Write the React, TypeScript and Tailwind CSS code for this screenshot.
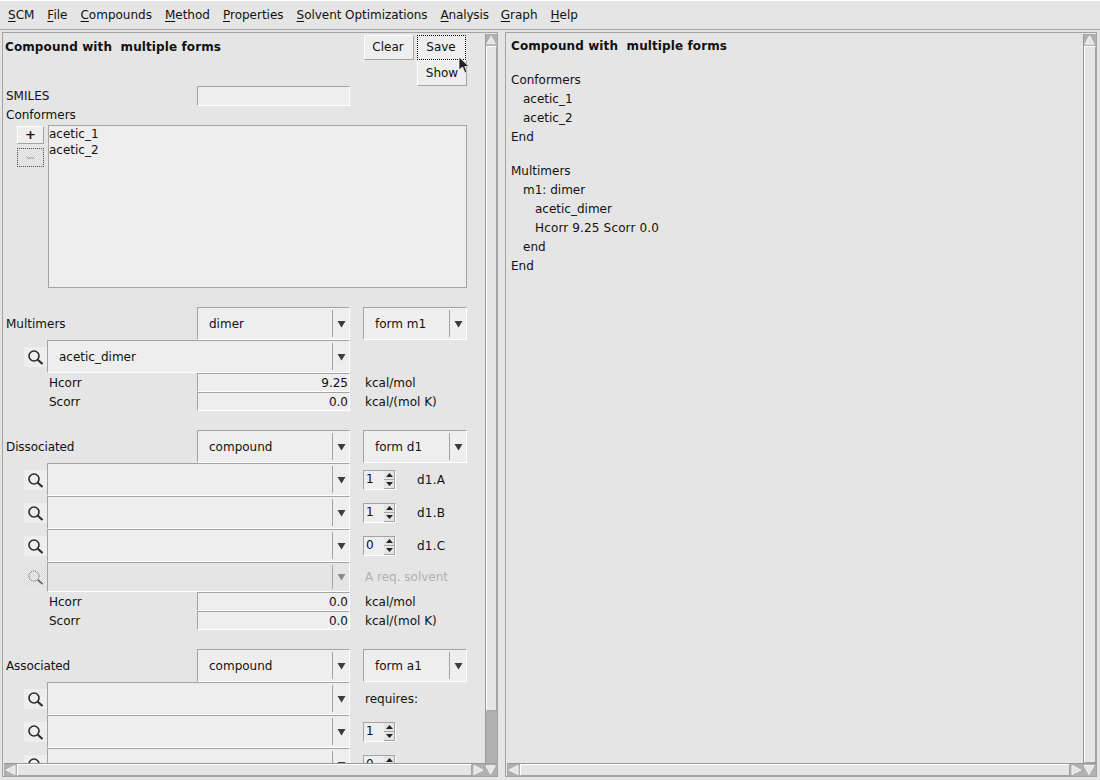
import React from "react";

const menus: [string, string][] = [
  ["SCM", ""],
  ["File", ""],
  ["Compounds", ""],
  ["Method", ""],
  ["Properties", ""],
  ["Solvent Optimizations", "tracking-[-0.05px]"],
  ["Analysis", "tracking-[-0.15px]"],
  ["Graph", "ml-[-1px]"],
  ["Help", ""],
];

function SearchIcon({ disabled }: { disabled?: boolean }) {
  return (
    <svg width="16" height="16" viewBox="0 0 16 16" fill="none" stroke={disabled ? "#555555" : "#2a2a2a"}>
      <circle cx="6" cy="7" r="5" strokeWidth={disabled ? 1 : 1.6} strokeDasharray={disabled ? "1 1" : undefined} />
      <path d="M9.8 10.8 L14.5 15" strokeWidth={disabled ? 1.6 : 2.2} />
    </svg>
  );
}

function Combo({ value, className, disabled }: { value?: string; className: string; disabled?: boolean }) {
  return (
    <div className={`flex border-t border-l border-t-[#a3a3a3] border-l-[#a3a3a3] border-r border-b border-r-white border-b-white ${disabled ? "bg-[#e5e5e5]" : "bg-[#eeeeee]"} ${className}`}>
      <div className="flex-1 min-w-0 pl-[11px] flex items-center">{value}</div>
      <div className="w-[17px] flex items-center justify-center my-[2px] border-l border-l-[#a3a3a3]">
        <svg width="9" height="8" viewBox="0 0 9 8">
          <polygon points="0.5,1 8.5,1 4.5,7.5" fill={disabled ? "#8a8a8a" : "#3c3c3c"} />
        </svg>
      </div>
    </div>
  );
}

function Field({ value, className }: { value?: string; className: string }) {
  return (
    <div className={`flex items-center justify-end pr-[1px] border-t border-l border-t-[#a3a3a3] border-l-[#a3a3a3] border-r border-b border-r-white border-b-white bg-[#eeeeee] ${className}`}>
      {value}
    </div>
  );
}

function FormRow({ label, first, second, labelClass = "" }: { label: string; first: string; second: string; labelClass?: string }) {
  return (
    <div className="flex h-[33px] shrink-0">
      <div className={`w-[194px] pl-[3px] flex items-center ${labelClass}`}>{label}</div>
      <Combo value={first} className="w-[153px]" />
      <Combo value={second} className="w-[104px] ml-[13px]" />
    </div>
  );
}

function SubRow({ value, disabled, children, h = "h-[33px]" }: { value?: string; disabled?: boolean; children?: React.ReactNode; h?: string }) {
  return (
    <div className={`flex shrink-0 ${h}`}>
      <div className="ml-[21px] w-[23px] h-full flex items-center">
        <div className={`w-[23px] h-[20px] flex items-center justify-center ${disabled ? "bg-[repeating-conic-gradient(#d8d8d8_0_25%,#eeeeee_0_50%)] bg-[length:2px_2px]" : "bg-[#eeeeee]"}`}>
          <SearchIcon disabled={disabled} />
        </div>
      </div>
      <Combo value={value} disabled={disabled} className="w-[303px]" />
      {children}
    </div>
  );
}

function ValueRow({ label, value, unit }: { label: string; value: string; unit: string }) {
  return (
    <div className="flex h-[19px] shrink-0">
      <div className="w-[194px] pl-[46px] flex items-center">{label}</div>
      <Field value={value} className="w-[153px]" />
      <div className="ml-[15px] flex items-center">{unit}</div>
    </div>
  );
}

function Spin({ value, tag }: { value: string; tag?: string }) {
  return (
    <div className="flex items-center ml-[13px]">
      <div className="w-[33px] h-[20px] flex border-t border-l border-t-[#a3a3a3] border-l-[#a3a3a3] border-r border-b border-r-white border-b-white bg-[#eeeeee]">
        <div className="flex-1 pl-[2px] flex items-center h-[17px]">{value}</div>
        <div className="w-[11px] flex flex-col">
          <div className="h-[9px] flex items-center justify-center bg-[#e5e5e5] border-r border-b border-r-[#a3a3a3] border-b-[#a3a3a3]">
            <svg width="7" height="4" viewBox="0 0 7 4"><polygon points="3.5,0 7,4 0,4" fill="#222222" /></svg>
          </div>
          <div className="h-[9px] flex items-center justify-center bg-[#e5e5e5] border-r border-b border-r-[#a3a3a3] border-b-[#a3a3a3]">
            <svg width="7" height="4" viewBox="0 0 7 4"><polygon points="0,0 7,0 3.5,4" fill="#222222" /></svg>
          </div>
        </div>
      </div>
      {tag && <div className="ml-[21px] tracking-[0.2px]">{tag}</div>}
    </div>
  );
}

function Arrow({ dir, className }: { dir: "up" | "down" | "left" | "right"; className: string }) {
  const pts = {
    up: "6,1.5 11,10.5 1,10.5",
    down: "1,1.5 11,1.5 6,10.5",
    left: "2,6 11,1.5 11,10.5",
    right: "2,1.5 11,6 2,10.5",
  }[dir];
  return (
    <div className={`shrink-0 bg-[#b0b0b0] flex items-center justify-center ${className}`}>
      <svg width="13" height="12" viewBox="0 0 13 12">
        <polygon points={pts} fill="#e5e5e5" stroke="#f4f4f4" strokeWidth="1" />
      </svg>
    </div>
  );
}

function VScroll({ thumbClass, trough, w }: { thumbClass: string; trough?: string; w: string }) {
  return (
    <div className={`shrink-0 flex flex-col ${w}`}>
      <div className="flex-1 mt-[1px] flex flex-col bg-[#b0b0b0] border-l border-l-[#999999]">
        <Arrow dir="up" className="h-[12px]" />
        <div className={`border border-[#a3a3a3] border-t-white border-l-white bg-[#e5e5e5] ${thumbClass}`} />
        {trough && <div className={`flex-1 ${trough}`} />}
      </div>
    </div>
  );
}

function HScroll({ corner }: { corner: string }) {
  return (
    <div className="h-[13px] shrink-0 pl-[1px] flex">
      <div className="flex-1 flex bg-[#b0b0b0] border-t border-t-[#999999]">
        <Arrow dir="left" className="w-[13px]" />
        <div className="flex-1 border border-[#a3a3a3] border-t-white border-l-white bg-[#e5e5e5]" />
        <Arrow dir="right" className="w-[13px]" />
        <Arrow dir="down" className={corner} />
      </div>
    </div>
  );
}

const outLines: [string, string][] = [
  ["Conformers", "pl-0"],
  ["acetic_1", "pl-[12px]"],
  ["acetic_2", "pl-[12px]"],
  ["End", "pl-0"],
];
const outLines2: [string, string][] = [
  ["Multimers", "pl-0"],
  ["m1: dimer", "pl-[12px]"],
  ["acetic_dimer", "pl-[24px]"],
  ["Hcorr 9.25 Scorr 0.0", "pl-[24px] tracking-[0.15px]"],
  ["end", "pl-[12px]"],
  ["End", "pl-0"],
];

export default function App() {
  return (
    <div className="relative w-[1100px] h-[780px] overflow-hidden flex flex-col bg-[#e5e5e5] text-[12px] text-[#111111] font-['DejaVu_Sans',sans-serif]">
      <div className="h-[30px] shrink-0 flex items-center gap-[13px] pl-[8px] border-b border-b-[#a3a3a3] border-t border-t-white">
        {menus.map(([m, c]) => (
          <span key={m} className={c}>
            <u className="underline-offset-2">{m[0]}</u>
            {m.slice(1)}
          </span>
        ))}
      </div>
      <div className="h-[745px] mt-[2px] flex pl-[2px] gap-[7px]">
        <div className="w-[496px] flex flex-col border border-[#a3a3a3]">
          <div className="flex-1 flex min-h-0">
            <div className="flex-1 overflow-hidden flex flex-col">
              <div className="flex justify-between shrink-0 h-[53px]">
                <div className="pl-[2px] pt-[5px] font-bold tracking-[0.1px]">Compound with&nbsp; multiple forms</div>
                <div className="flex mr-[18px] pt-[2px]">
                  <div className="w-[50px] h-[25px] pb-[1px] pr-[2px] flex items-center justify-center bg-[#eeeeee] border border-white border-r-[#a3a3a3] border-b-[#a3a3a3]">Clear</div>
                  <div className="ml-[3px] w-[50px] flex flex-col">
                    <div className="h-[25px] w-[49px] pb-[1px] pr-[1px] flex items-center justify-center bg-[#eeeeee] border border-dotted border-black">Save</div>
                    <div className="h-[26px] flex items-center justify-center bg-[#eeeeee] border border-white border-r-[#a3a3a3] border-b-[#a3a3a3]">Show</div>
                  </div>
                </div>
              </div>
              <div className="flex h-[20px] shrink-0">
                <div className="w-[194px] pl-[3px] flex items-center">SMILES</div>
                <Field className="w-[153px]" />
              </div>
              <div className="h-[19px] shrink-0 pl-[3px] pb-[2px] flex items-center">Conformers</div>
              <div className="flex shrink-0 h-[163px]">
                <div className="ml-[14px] w-[31px] flex flex-col gap-[4px] pt-[1px]">
                  <div className="w-[27px] h-[18px] pb-[2px] flex items-center justify-center bg-[#eeeeee] border border-[#c8c8c8] border-r-[#a3a3a3] border-b-[#a3a3a3] border-t-white border-l-white font-bold text-[13px] leading-none">+</div>
                  <div className="w-[27px] h-[19px] flex items-center justify-center border border-dotted border-[#555555] bg-[repeating-conic-gradient(#d8d8d8_0_25%,#eeeeee_0_50%)] bg-[length:2px_2px]">
                    <svg width="9" height="4" viewBox="0 0 9 4" fill="none">
                      <path d="M0.5 1 L2.5 2.5 L4.5 1.5 L6.5 2.5 L8.5 1" stroke="#666666" strokeWidth="1" strokeDasharray="1 0.6" />
                    </svg>
                  </div>
                </div>
                <div className="w-[419px] bg-[#eeeeee] border border-[#a3a3a3] leading-[16px]">
                  <div>acetic_1</div>
                  <div>acetic_2</div>
                </div>
              </div>
              <div className="mt-[19px]">
                <FormRow label="Multimers" first="dimer" second="form m1" />
                <SubRow value="acetic_dimer" />
                <ValueRow label="Hcorr" value="9.25" unit="kcal/mol" />
                <ValueRow label="Scorr" value="0.0" unit="kcal/(mol K)" />
              </div>
              <div className="mt-[19px]">
                <FormRow label="Dissociated" first="compound" second="form d1" labelClass="tracking-[-0.1px]" />
                <SubRow><Spin value="1" tag="d1.A" /></SubRow>
                <SubRow><Spin value="1" tag="d1.B" /></SubRow>
                <SubRow><Spin value="0" tag="d1.C" /></SubRow>
                <SubRow disabled h="h-[30px]">
                  <div className="ml-[15px] flex items-center text-[#b0b0b0]">A req. solvent</div>
                </SubRow>
                <ValueRow label="Hcorr" value="0.0" unit="kcal/mol" />
                <ValueRow label="Scorr" value="0.0" unit="kcal/(mol K)" />
              </div>
              <div className="mt-[19px]">
                <FormRow label="Associated" first="compound" second="form a1" labelClass="tracking-[-0.1px]" />
                <SubRow><div className="ml-[15px] flex items-center">requires:</div></SubRow>
                <SubRow><Spin value="1" /></SubRow>
                <SubRow><Spin value="0" /></SubRow>
              </div>
            </div>
            <VScroll w="w-[12px]" thumbClass="h-[665px]" trough="bg-[#b0b0b0]" />
          </div>
          <HScroll corner="w-[12px]" />
        </div>
        <div className="w-[592px] flex flex-col border border-[#a3a3a3]">
          <div className="flex-1 flex min-h-0">
            <div className="flex-1 pl-[5px] pt-[4px] leading-[19px]">
              <div className="font-bold tracking-[0.1px]">Compound with&nbsp; multiple forms</div>
              <div className="mt-[15px]">
                {outLines.map(([t, c], i) => <div key={i} className={c}>{t}</div>)}
              </div>
              <div className="mt-[15px]">
                {outLines2.map(([t, c], i) => <div key={i} className={c}>{t}</div>)}
              </div>
            </div>
            <VScroll w="w-[13px]" thumbClass="flex-1" />
          </div>
          <HScroll corner="w-[13px]" />
        </div>
      </div>
      <svg className="absolute left-[458px] top-[56px]" width="13" height="19" viewBox="0 0 13 19">
        <polygon points="1,1 1,14 4.5,11 7,17 9,16 6.8,10.5 11,10.5" fill="#222222" stroke="#ffffff" strokeWidth="0.7" />
      </svg>
    </div>
  );
}
